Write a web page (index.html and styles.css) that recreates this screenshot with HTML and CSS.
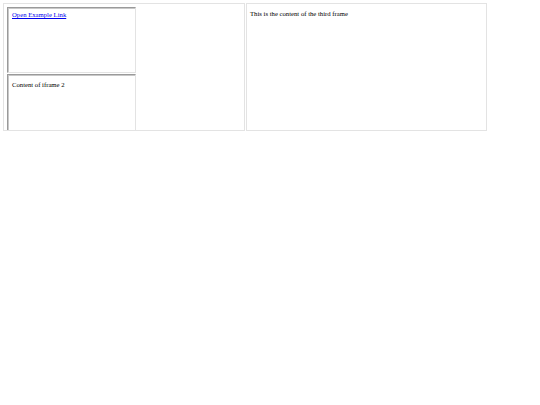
FILE: index.html
```html
<!DOCTYPE html>
<html>
<head>
<meta charset="utf-8">
<link rel="stylesheet" href="styles.css">
</head>
<body>
<div class="row">
  <div class="outer first">
    <div class="frame f1"><a class="link" href="#">Open Example Link</a></div>
    <div class="frame f2"><span class="txt">Content of iframe 2</span></div>
  </div>
  <div class="outer second">
    <div class="third">This is the content of the third frame</div>
  </div>
</div>
</body>
</html>
```
FILE: styles.css
```css
html, body {
  margin: 0;
  padding: 0;
  background: #ffffff;
}
body {
  font-family: "Liberation Serif", "Times New Roman", serif;
  font-size: 6.7px;
  line-height: 8px;
  color: #000;
}
.row {
  display: flex;
  gap: 1px;
  padding: 3px;
}
.outer {
  box-sizing: border-box;
  height: 128px;
  border: 1px solid #e3e3e3;
  overflow: hidden;
}
.first {
  width: 242px;
  padding: 3px;
  display: flex;
  flex-direction: column;
  gap: 1px;
}
.second {
  width: 241px;
}
.frame {
  box-sizing: border-box;
  width: 129px;
  flex: none;
  border-top: 1px solid #9a9a9a;
  border-left: 1px solid #9a9a9a;
  border-right: 1px solid #e3e3e3;
  border-bottom: 1px solid #e3e3e3;
  box-shadow: inset 1px 1px 0 #c8c8c8;
}
.f1 {
  height: 66px;
  padding: 3px 0 0 4px;
}
.f2 {
  height: 80px;
  padding: 6px 0 0 4px;
}
.link {
  color: #0000ee;
  text-decoration: underline;
}
.third {
  padding: 6px 0 0 3px;
}
```
